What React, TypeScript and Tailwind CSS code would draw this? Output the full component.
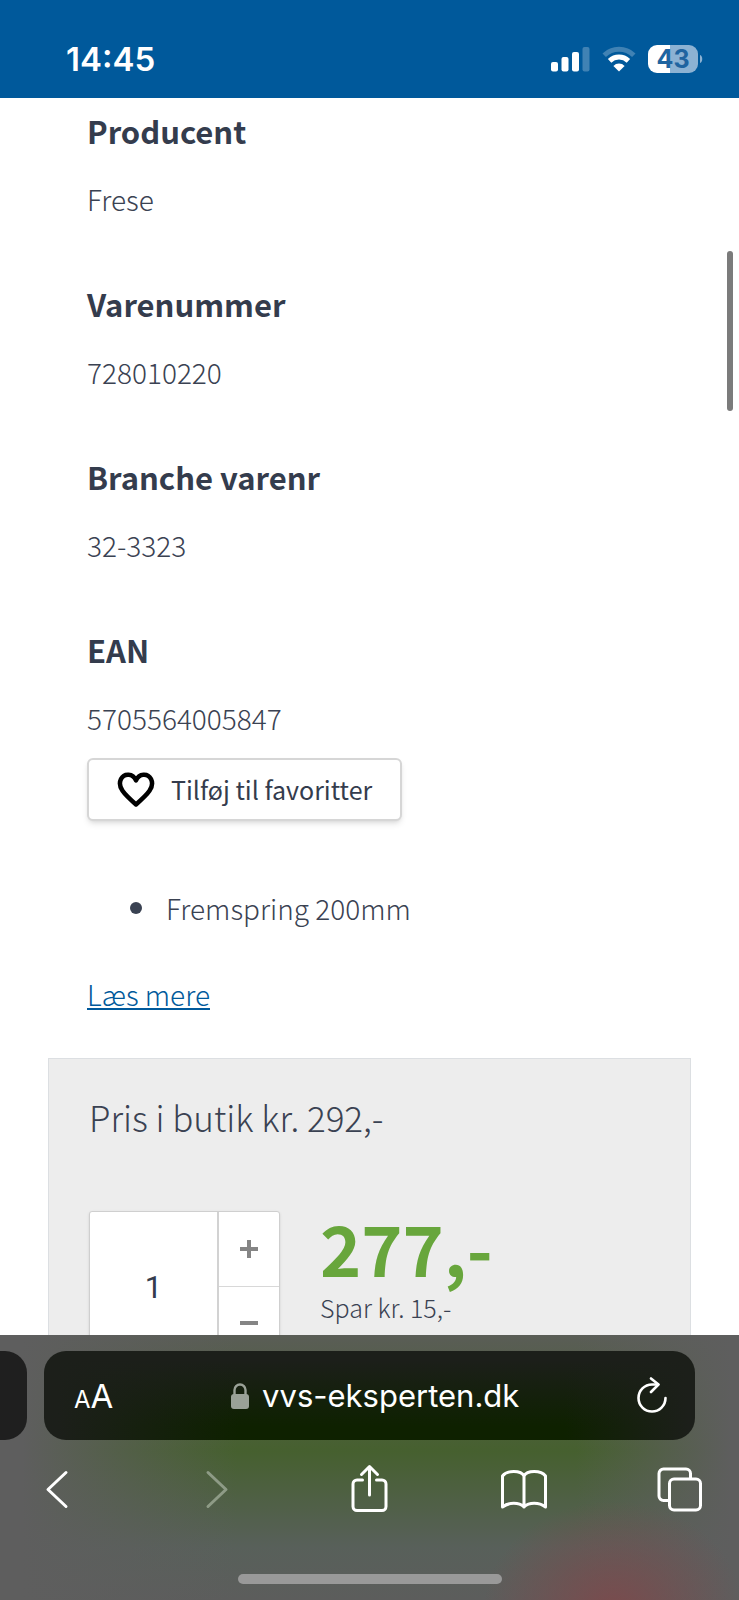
import { useState } from "react";

const SPECS = [
  { label: "Producent", value: "Frese" },
  { label: "Varenummer", value: "728010220" },
  { label: "Branche varenr", value: "32-3323" },
  { label: "EAN", value: "5705564005847" },
];

function StatusBar() {
  return (
    <header className="flex h-[98px] shrink-0 items-center justify-between bg-[#00599b] pt-5 pr-9 pl-[66px] font-['Inter',sans-serif] text-white">
      <time className="text-[33px] leading-10 font-semibold">14:45</time>
      <div className="flex items-center gap-3">
        <svg width="39" height="26" viewBox="0 0 39 26" fill="currentColor">
          <rect x="0" y="16" width="7" height="9.5" rx="2" />
          <rect x="10.5" y="11" width="7" height="14.5" rx="2" />
          <rect x="21" y="6" width="7" height="19.5" rx="2" />
          <rect x="31.5" y="1" width="7" height="24.5" rx="2" opacity=".25" />
        </svg>
        <svg width="34" height="26" viewBox="0 0 34 26" fill="none" stroke="currentColor" strokeWidth="5">
          <path d="M2.2 9.2a21.5 21.5 0 0 1 29.6 0" opacity=".25" />
          <path d="M7.6 14.8a13.8 13.8 0 0 1 18.8 0" />
          <path d="M17 25.5l-5.6-5.6a8 8 0 0 1 11.2 0z" fill="currentColor" stroke="none" />
        </svg>
        <div className="flex items-center gap-px">
          <span className="flex h-7 w-[50px] items-center justify-center rounded-[9px] bg-[linear-gradient(90deg,#fff_43%,#8cb2d3_43%)] text-[25px] leading-7 font-bold text-[#1f64a0]">
            43
          </span>
          <svg width="4" height="10" viewBox="0 0 4 10" fill="#8cb2d3">
            <path d="M1 1c3 1 3 7 0 8z" />
          </svg>
        </div>
      </div>
    </header>
  );
}

function QuantityPicker() {
  const [qty, setQty] = useState(1);

  return (
    <div className="flex h-[150px] w-[191px] shrink-0 rounded-[3px] border border-[#cfcfcf] bg-white shadow-sm">
      <input
        aria-label="Antal"
        value={qty}
        onChange={(e) => setQty(Number(e.target.value) || 1)}
        className="min-w-0 flex-1 pt-1 text-center font-['Roboto',sans-serif] text-[31px] text-[#343c4d] outline-none"
      />
      <div className="flex w-[62px] flex-col border-l-2 border-[#d2d2d2] text-[#858585]">
        <button
          type="button"
          aria-label="Flere"
          onClick={() => setQty(qty + 1)}
          className="flex flex-1 items-center justify-center border-b border-[#d8d8d8]"
        >
          <svg width="18" height="18" viewBox="0 0 18 18" fill="currentColor">
            <path d="M7 0h4v7h7v4h-7v7H7v-7H0V7h7z" />
          </svg>
        </button>
        <button
          type="button"
          aria-label="Færre"
          onClick={() => setQty(Math.max(1, qty - 1))}
          className="flex flex-1 items-center justify-center"
        >
          <svg width="18" height="18" viewBox="0 0 18 18" fill="currentColor">
            <path d="M0 7h18v4H0z" />
          </svg>
        </button>
      </div>
    </div>
  );
}

function BrowserBar() {
  return (
    <footer className="flex h-[265px] shrink-0 flex-col bg-[radial-gradient(ellipse_130px_110px_at_83%_104%,#7a4b4d,transparent),linear-gradient(90deg,#5e5e5e_3%,transparent_32%),linear-gradient(270deg,#5e5e5e_1%,transparent_22%),linear-gradient(180deg,#5a5d56,#46602f_44%,#4d6040_58%,#58605a_80%,#5c5d5c)] pt-4 font-['Inter',sans-serif] text-white">
      <div className="flex gap-[17px] pr-11">
        <div className="h-[89px] w-[27px] rounded-r-[22px] bg-[#1f1f1f]" />
        <div className="flex h-[89px] flex-1 items-center justify-between rounded-[22px] bg-[linear-gradient(90deg,#1c1f1a_2%,transparent_30%),linear-gradient(270deg,#1c1f1a_1%,transparent_20%),linear-gradient(180deg,#1c1f1a_10%,#0e2100_85%)] pr-[27px] pl-[30px]">
          <button type="button" aria-label="Sideindstillinger" className="text-[33px] leading-10">
            <span className="text-[24px] leading-none">A</span>A
          </button>
          <div className="flex items-center gap-3 text-[31px] leading-10">
            <svg width="20" height="26" viewBox="0 0 20 26" className="text-[#9aa197]">
              <rect x="1" y="11" width="18" height="15" rx="3" fill="currentColor" />
              <path d="M4.5 12V7a5.5 5.5 0 0 1 11 0v5" fill="none" stroke="currentColor" strokeWidth="2.4" />
            </svg>
            <span>vvs-eksperten.dk</span>
          </div>
          <button type="button" aria-label="Genindlæs">
            <svg width="32" height="38" viewBox="0 0 32 38" fill="none" stroke="currentColor" strokeWidth="2.6" strokeLinecap="round" strokeLinejoin="round">
              <path d="M29.500 21A13.500 13.500 0 1 1 16 7.500h6" />
              <path d="M15 1.500L22.500 7.500 15 15" />
            </svg>
          </button>
        </div>
      </div>

      <nav className="mt-6 flex justify-between pr-9 pl-[34px] [&_svg]:fill-none [&_svg]:stroke-current [&_svg]:stroke-3 [&_svg]:[stroke-linecap:round] [&_svg]:[stroke-linejoin:round]">
        <button type="button" aria-label="Tilbage">
          <svg width="46" height="50" viewBox="0 0 46 50">
            <path d="M32 8.500L14 25.500l18 17" />
          </svg>
        </button>
        <button type="button" aria-label="Frem" className="text-[#8e9b86]">
          <svg width="46" height="50" viewBox="0 0 46 50">
            <path d="M18 8.500l18 17-18 17" />
          </svg>
        </button>
        <button type="button" aria-label="Del">
          <svg width="46" height="50" viewBox="0 0 46 50">
            <path d="M16.500 16H11a4 4 0 0 0-4 4v22.500a4 4 0 0 0 4 4h25a4 4 0 0 0 4-4V20a4 4 0 0 0-4-4h-5.500" />
            <path d="M23.500 31V3M15.500 10.500l8-8 8 8" />
          </svg>
        </button>
        <button type="button" aria-label="Bogmærker">
          <svg width="46" height="50" viewBox="0 0 46 50">
            <path d="M23 12C20 6 6 6 1.500 12v31C8 38 18 38 23 43c5-5 15-5 21.500 0V12C40 6 26 6 23 12zM23 12v31" />
          </svg>
        </button>
        <button type="button" aria-label="Faner">
          <svg width="46" height="50" viewBox="0 0 46 50">
            <path d="M11 36.500H6.500a4.500 4.500 0 0 1-4.500-4.500V9.500A4.500 4.500 0 0 1 6.500 5H29a4.500 4.500 0 0 1 4.500 4.500V14" />
            <rect x="12.500" y="15" width="31" height="31" rx="4.500" />
          </svg>
        </button>
      </nav>

      <div className="mx-auto mt-auto mb-4 h-[10px] w-[264px] rounded-full bg-[#999]" />
    </footer>
  );
}

export default function App() {
  return (
    <div className="flex h-screen flex-col overflow-hidden bg-white font-['Noto_Sans_CJK_SC',sans-serif] text-[#3a4252]">
      <StatusBar />

      <main className="relative min-h-0 flex-1 overflow-hidden px-12 pt-[13px]">
        <div className="absolute top-[153px] right-1.5 h-[160px] w-1.5 rounded-full bg-[#7b7b7b]" />

        <div className="px-[39px]">
          <dl className="flex flex-col gap-[65px]">
            {SPECS.map((spec) => (
              <div key={spec.label}>
                <dt className="text-[31px] leading-10 font-bold text-[#343c4d]">{spec.label}</dt>
                <dd className="mt-7 text-[28px] leading-10 font-light">{spec.value}</dd>
              </div>
            ))}
          </dl>

          <button
            type="button"
            className="mt-5 flex h-[63px] items-center gap-4 rounded-md border-2 border-[#d6d6d6] bg-white px-7 text-[25px] text-[#343c4d] shadow-md"
          >
            <svg width="38" height="36" viewBox="0 0 38 36" fill="none" stroke="#000" strokeWidth="4.500" strokeLinejoin="round">
              <path d="M19 8.500C16 1 7 1 4 7c-4 8 3 15 15 25.500C31 22 38 15 34 7 31 1 22 1 19 8.500z" />
            </svg>
            Tilføj til favoritter
          </button>

          <ul className="mt-[67px] pl-[43px]">
            <li className="flex items-center gap-6 text-[28px] leading-10 font-light">
              <span className="size-3 rounded-full bg-[#3a4252]" />
              Fremspring 200mm
            </li>
          </ul>

          <a
            href="#beskrivelse"
            className="mt-[46px] inline-block text-[28px] leading-10 font-light text-[#00599b] underline decoration-2 underline-offset-2"
          >
            Læs mere
          </a>
        </div>

        <section className="mt-11 border border-[#dcdfe2] bg-[#ededed] px-10 pt-[34px] pb-10">
          <h2 className="text-[35px] leading-[48px] font-light">Pris i butik kr. 292,-</h2>
          <div className="mt-[70px] flex gap-10">
            <QuantityPicker />
            <div>
              <p className="text-[70px] leading-[72px] font-bold text-[#68a63c]">277,-</p>
              <p className="mt-1 text-[25px] leading-10 font-light">Spar kr. 15,-</p>
            </div>
          </div>
        </section>
      </main>

      <BrowserBar />
    </div>
  );
}
